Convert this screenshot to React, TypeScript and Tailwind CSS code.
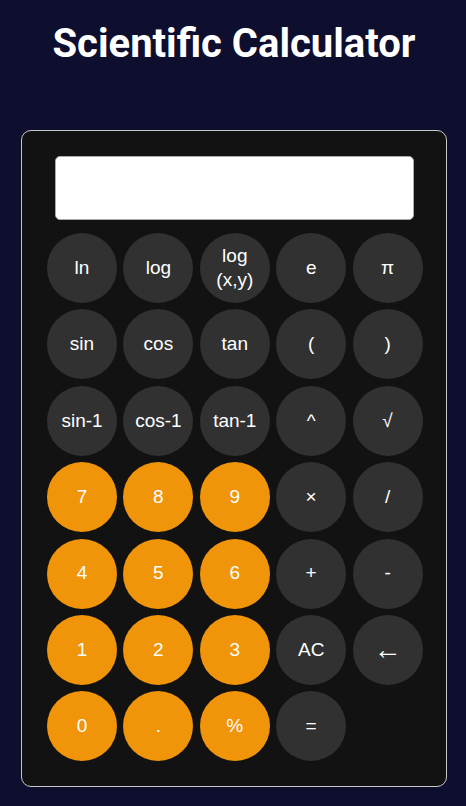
import React from "react";

type B = { label: React.ReactNode; kind: "dark" | "orange" };

const rows: B[][] = [
  [
    { label: "ln", kind: "dark" },
    { label: "log", kind: "dark" },
    { label: (<span className="leading-[24px]">log<br />(x,y)</span>), kind: "dark" },
    { label: "e", kind: "dark" },
    { label: "π", kind: "dark" },
  ],
  [
    { label: "sin", kind: "dark" },
    { label: "cos", kind: "dark" },
    { label: "tan", kind: "dark" },
    { label: "(", kind: "dark" },
    { label: ")", kind: "dark" },
  ],
  [
    { label: "sin-1", kind: "dark" },
    { label: "cos-1", kind: "dark" },
    { label: "tan-1", kind: "dark" },
    { label: "^", kind: "dark" },
    { label: "√", kind: "dark" },
  ],
  [
    { label: "7", kind: "orange" },
    { label: "8", kind: "orange" },
    { label: "9", kind: "orange" },
    { label: "×", kind: "dark" },
    { label: "/", kind: "dark" },
  ],
  [
    { label: "4", kind: "orange" },
    { label: "5", kind: "orange" },
    { label: "6", kind: "orange" },
    { label: "+", kind: "dark" },
    { label: "-", kind: "dark" },
  ],
  [
    { label: "1", kind: "orange" },
    { label: "2", kind: "orange" },
    { label: "3", kind: "orange" },
    { label: "AC", kind: "dark" },
    { label: (<span className="text-[28px]">←</span>), kind: "dark" },
  ],
  [
    { label: "0", kind: "orange" },
    { label: ".", kind: "orange" },
    { label: "%", kind: "orange" },
    { label: "=", kind: "dark" },
  ],
];

export default function App() {
  return (
    <div className="min-h-[806px] w-full bg-[#0e0e2e] flex flex-col items-center pt-[20px]">
      <h1
        className="text-white font-bold text-[40px] leading-[48px] text-center pl-[2px]"
        style={{ fontFamily: "Roboto, sans-serif" }}
      >
        Scientific Calculator
      </h1>
      <div
        className="mt-[62px] ml-[2px] w-[426px] bg-[#121212] border border-[#c8c8c8] rounded-[10px] px-[25px] pt-[25px] pb-[25px] flex flex-col items-center"
        style={{ fontFamily: '"Liberation Sans", Arial, sans-serif' }}
      >
        <div className="w-[359px] h-[64px] bg-white border border-[#aaaaaa] rounded-[5px]" />
        <div className="mt-[13px] grid grid-cols-[repeat(5,70px)] gap-[6.4px] self-start">
          {rows.flat().map((b, i) => (
            <button
              key={i}
              className={
                "w-[70px] h-[70px] rounded-full flex items-center justify-center text-white text-[19px] " +
                (b.kind === "orange" ? "bg-[#f0950a]" : "bg-[#313131]")
              }
            >
              {b.label}
            </button>
          ))}
        </div>
      </div>
    </div>
  );
}
